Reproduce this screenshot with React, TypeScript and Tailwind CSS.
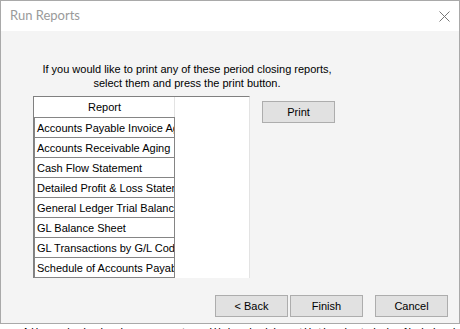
const REPORTS = [
  'Accounts Payable Invoice Aging',
  'Accounts Receivable Aging',
  'Cash Flow Statement',
  'Detailed Profit & Loss Statement',
  'General Ledger Trial Balance',
  'GL Balance Sheet',
  'GL Transactions by G/L Code',
  'Schedule of Accounts Payable',
];

const ui = "font-['Liberation_Sans',Arial,sans-serif] text-[11px] leading-[14px] text-black";

function WinButton({ label, className = '' }: { label: string; className?: string }) {
  return (
    <button
      className={`flex h-[22px] w-[73px] items-center justify-center border border-[#adadad] bg-[#e1e1e1] ${ui} ${className}`}
    >
      {label}
    </button>
  );
}

export default function App() {
  return (
    <div className="h-[329px] w-[460px] overflow-hidden bg-white">
      <div className="flex w-[460px] flex-col border border-[#a9a9a9]">
        {/* title bar */}
        <div className="flex h-[30px] items-center justify-between bg-white pl-[9px] pr-[9px]">
          <span className="font-['Lato',sans-serif] text-[13px] text-[#9a9a9a]">Run Reports</span>
          <svg width="11" height="11" viewBox="0 0 11 11" className="mt-[1px]">
            <path d="M0.5 0.5 L10.5 10.5 M10.5 0.5 L0.5 10.5" stroke="#777" strokeWidth="1" fill="none" />
          </svg>
        </div>

        {/* body */}
        <div className={`flex h-[292px] flex-col bg-[#f4f4f4] pl-[32px] pr-[11px] pt-[31px] ${ui}`}>
          <div className="w-[308px] text-center">
            If you would like to print any of these period closing reports,
            <br />
            select them and press the print button.
          </div>

          <div className="mt-[6px] flex items-start">
            <div className="flex w-[217px] border-l border-r border-t border-l-[#808080] border-r-[#e3e3e3] border-t-[#808080] bg-white">
              <div className="w-[141px]">
                <div className="flex h-[20px] items-center justify-center border-r border-[#e3e3e3] pl-[1px]">
                  Report
                </div>
                {REPORTS.map((r, i) => (
                  <div
                    key={r}
                    className={`flex h-[20px] items-center overflow-hidden whitespace-nowrap border-l border-r border-t border-[#858585] pl-[2px] ${
                      i === REPORTS.length - 1 ? 'h-[21px] border-b' : ''
                    }`}
                  >
                    {r}
                  </div>
                ))}
              </div>
              <div className="flex-1" />
            </div>
            <WinButton label="Print" className="ml-[12px] mt-[5px] w-[73px]" />
          </div>

          <div className="mt-[17px] flex justify-end">
            <WinButton label="< Back" />
            <WinButton label="Finish" className="ml-[2px]" />
            <WinButton label="Cancel" className="ml-[12px]" />
          </div>
        </div>
      </div>

      {/* window behind, barely visible */}
      <div className="h-[5px] overflow-hidden pl-[22px]">
        <div className={`${ui} mt-[1px] tracking-[2px] text-[#111]`}>
          All period closing reports will be held until the batch is finished and locked.
        </div>
      </div>
    </div>
  );
}
